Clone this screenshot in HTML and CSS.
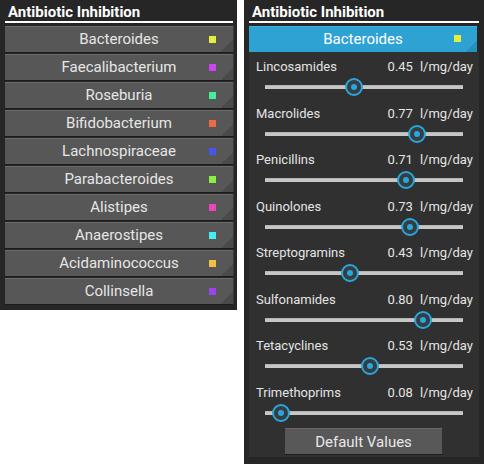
FILE: index.html
```html
<!DOCTYPE html>
<html>
<head>
<meta charset="utf-8">
<link rel="stylesheet" href="styles.css">
</head>
<body>
<div class="page">
  <div class="panel left">
    <div class="title">Antibiotic Inhibition</div>
    <div class="list">
      <div class="btn"><span>Bacteroides</span><i class="sq" style="background:#e4ee3c"></i></div>
      <div class="btn"><span>Faecalibacterium</span><i class="sq" style="background:#cc45ee"></i></div>
      <div class="btn"><span>Roseburia</span><i class="sq" style="background:#45ee9c"></i></div>
      <div class="btn"><span>Bifidobacterium</span><i class="sq" style="background:#ee6a45"></i></div>
      <div class="btn"><span>Lachnospiraceae</span><i class="sq" style="background:#4555ee"></i></div>
      <div class="btn"><span>Parabacteroides</span><i class="sq" style="background:#8cee45"></i></div>
      <div class="btn"><span>Alistipes</span><i class="sq" style="background:#ee45bb"></i></div>
      <div class="btn"><span>Anaerostipes</span><i class="sq" style="background:#45eeee"></i></div>
      <div class="btn"><span>Acidaminococcus</span><i class="sq" style="background:#eec045"></i></div>
      <div class="btn"><span>Collinsella</span><i class="sq" style="background:#9945ee"></i></div>
    </div>
  </div>
  <div class="panel right">
    <div class="title">Antibiotic Inhibition</div>
    <div class="btn active"><span>Bacteroides</span><i class="sq" style="background:#e4ee3c"></i></div>
    <div class="inner">
      <div class="block">
        <div class="lbl"><span class="name">Lincosamides</span><span class="val">0.45</span><span class="unit">l/mg/day</span></div>
        <div class="slider"><div class="track"></div><div class="thumb" style="left:45%"></div></div>
      </div>
      <div class="block">
        <div class="lbl"><span class="name">Macrolides</span><span class="val">0.77</span><span class="unit">l/mg/day</span></div>
        <div class="slider"><div class="track"></div><div class="thumb" style="left:77%"></div></div>
      </div>
      <div class="block">
        <div class="lbl"><span class="name">Penicillins</span><span class="val">0.71</span><span class="unit">l/mg/day</span></div>
        <div class="slider"><div class="track"></div><div class="thumb" style="left:71%"></div></div>
      </div>
      <div class="block">
        <div class="lbl"><span class="name">Quinolones</span><span class="val">0.73</span><span class="unit">l/mg/day</span></div>
        <div class="slider"><div class="track"></div><div class="thumb" style="left:73%"></div></div>
      </div>
      <div class="block">
        <div class="lbl"><span class="name">Streptogramins</span><span class="val">0.43</span><span class="unit">l/mg/day</span></div>
        <div class="slider"><div class="track"></div><div class="thumb" style="left:43%"></div></div>
      </div>
      <div class="block">
        <div class="lbl"><span class="name">Sulfonamides</span><span class="val">0.80</span><span class="unit">l/mg/day</span></div>
        <div class="slider"><div class="track"></div><div class="thumb" style="left:80%"></div></div>
      </div>
      <div class="block">
        <div class="lbl"><span class="name">Tetacyclines</span><span class="val">0.53</span><span class="unit">l/mg/day</span></div>
        <div class="slider"><div class="track"></div><div class="thumb" style="left:53%"></div></div>
      </div>
      <div class="block">
        <div class="lbl"><span class="name">Trimethoprims</span><span class="val">0.08</span><span class="unit">l/mg/day</span></div>
        <div class="slider"><div class="track"></div><div class="thumb" style="left:8%"></div></div>
      </div>
      <div class="default">Default Values</div>
    </div>
  </div>
</div>
</body>
</html>
```

FILE: styles.css
```css
* { box-sizing: border-box; }
html, body { margin: 0; padding: 0; background: #ffffff; }
body { font-family: Roboto, "Liberation Sans", sans-serif; }

.page {
  display: flex;
  align-items: flex-start;
  gap: 7px;
  width: 484px;
  height: 464px;
}

.panel {
  background: #262626;
  display: flex;
  flex-direction: column;
}
.panel.left { width: 237px; height: 310px; padding: 0 4px 0 5px; }
.panel.right { width: 240px; height: 464px; padding: 0 5px 0 5px; }

.title {
  color: #ffffff;
  font-weight: bold;
  font-size: 15px;
  line-height: 16px;
  height: 23px;
  padding: 4px 0 0 3px;
  border-bottom: 2px solid #ffffff;
  margin-bottom: 3px;
}

.list { display: flex; flex-direction: column; gap: 2px; }

.btn {
  position: relative;
  height: 26px;
  background: #575757;
  border-top: 1px solid #6c6c6c;
  box-shadow: 0 1px 0 #1c1c1c, 1px 0 0 #3a3a3a;
  display: flex;
  align-items: center;
  justify-content: center;
  color: #e6e6e6;
  font-size: 15px;
}
.btn span { line-height: 16px; margin-top: -1px; }
.btn::after {
  content: "";
  position: absolute;
  right: 0;
  bottom: 0;
  width: 12px;
  height: 12px;
  background: linear-gradient(135deg, transparent 50%, #4a4a4a 50%);
}
.btn .sq {
  position: absolute;
  right: 17px;
  top: 9px;
  width: 7px;
  height: 7px;
}
.btn.active {
  background: #2ea3d3;
  border-top-color: #3fb2df;
  color: #ffffff;
  box-shadow: none;
  margin-right: 2px;
}
.btn.active::after {
  background: linear-gradient(135deg, transparent 50%, #2691bd 50%);
}
.btn.active .sq { right: 16px; top: 8px; }

.inner {
  background: #303030;
  height: 405px;
  padding: 7px 0 3px 0;
  display: flex;
  flex-direction: column;
  gap: 6.5px;
}

.block { display: flex; flex-direction: column; }

.lbl {
  display: flex;
  height: 16px;
  line-height: 16px;
  font-size: 13px;
  color: #e4e4e4;
  padding: 0 6px 0 7px;
}
.lbl .name { flex: 1; }
.lbl .val { margin-right: 7px; }

.slider {
  position: relative;
  height: 24px;
  margin: 0 16px;
}
.track {
  position: absolute;
  left: 0;
  right: 0;
  top: 10px;
  height: 4px;
  background: #c6c6c6;
  border-top: 1px solid #b4b4b4;
}
.thumb {
  position: absolute;
  top: 3px;
  width: 18px;
  height: 18px;
  margin-left: -9px;
  border-radius: 50%;
  border: 2px solid #2ba6da;
  background: #343d42;
  display: flex;
  align-items: center;
  justify-content: center;
}
.thumb::after {
  content: "";
  width: 6px;
  height: 6px;
  border-radius: 50%;
  background: #2ba6da;
}

.default {
  align-self: center;
  margin-top: -3px;
  width: 157px;
  height: 26px;
  background: #585858;
  border-top: 1px solid #6a6a6a;
  box-shadow: 0 1px 0 #1e1e1e;
  color: #e8e8e8;
  font-size: 15px;
  display: flex;
  align-items: center;
  justify-content: center;
  margin-left: -1px;
}
```
